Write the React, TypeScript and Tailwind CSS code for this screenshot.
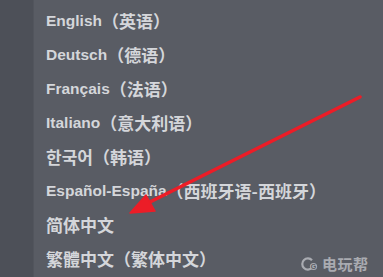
const languages: Array<{ latin: string; cjk?: string }> = [
  { latin: 'English', cjk: '（英语）' },
  { latin: 'Deutsch', cjk: '（德语）' },
  { latin: 'Français', cjk: '（法语）' },
  { latin: 'Italiano', cjk: '（意大利语）' },
  { latin: '', cjk: '한국어（韩语）' },
  { latin: 'Español-España', cjk: '（西班牙语-西班牙）' },
  { latin: '', cjk: '简体中文' },
  { latin: '', cjk: '繁體中文（繁体中文）' },
]

export default function App() {
  return (
    <div
      className="relative flex w-[383px] h-[277px] overflow-hidden bg-[#595c64]"
      style={{ fontFamily: '"Liberation Sans", Arial, "Noto Sans CJK SC", sans-serif' }}
    >
      <div className="w-[34px] shrink-0 bg-[#4d5058] border-r border-[#52555d]" />
      <div className="flex-1 pt-[4px] pl-[12px]">
        {languages.map((lang, i) => (
          <div key={i} className="h-[34px] flex items-center whitespace-nowrap font-bold text-[#d4d6da]">
            {lang.latin && <span className="text-[15.5px]">{lang.latin}</span>}
            {lang.cjk && (
              <span className="text-[17px]" style={{ fontFamily: '"Noto Sans CJK SC", sans-serif' }}>
                {lang.cjk}
              </span>
            )}
          </div>
        ))}
      </div>

      {/* red annotation arrow */}
      <svg className="absolute inset-0 pointer-events-none" width="383" height="277" viewBox="0 0 383 277">
        <line x1="360" y1="97" x2="148" y2="203" stroke="#ec1d27" strokeWidth="3.5" strokeLinecap="round" />
        <polygon points="130,213 146,195 155,211" fill="#ec1d27" stroke="#ec1d27" strokeWidth="1.5" strokeLinejoin="round" />
      </svg>

      {/* watermark */}
      <div className="absolute left-[301px] top-[253px] flex items-center gap-[3px] text-[#a9abb1]">
        <svg width="18" height="14" viewBox="0 0 18 14">
          <path d="M11 3.2 A5.6 5.6 0 1 0 11 10.8" fill="none" stroke="#a9abb1" strokeWidth="2.2" />
          <circle cx="12.5" cy="9.5" r="3.6" fill="#a9abb1" />
          <text x="12.5" y="12.2" textAnchor="middle" fontSize="7" fontWeight="bold" fill="#595c64" fontFamily="Liberation Sans, sans-serif">G</text>
        </svg>
        <span className="text-[15px] font-bold tracking-[0.5px]" style={{ fontFamily: '"Noto Sans CJK SC", sans-serif' }}>
          电玩帮
        </span>
      </div>
    </div>
  )
}
